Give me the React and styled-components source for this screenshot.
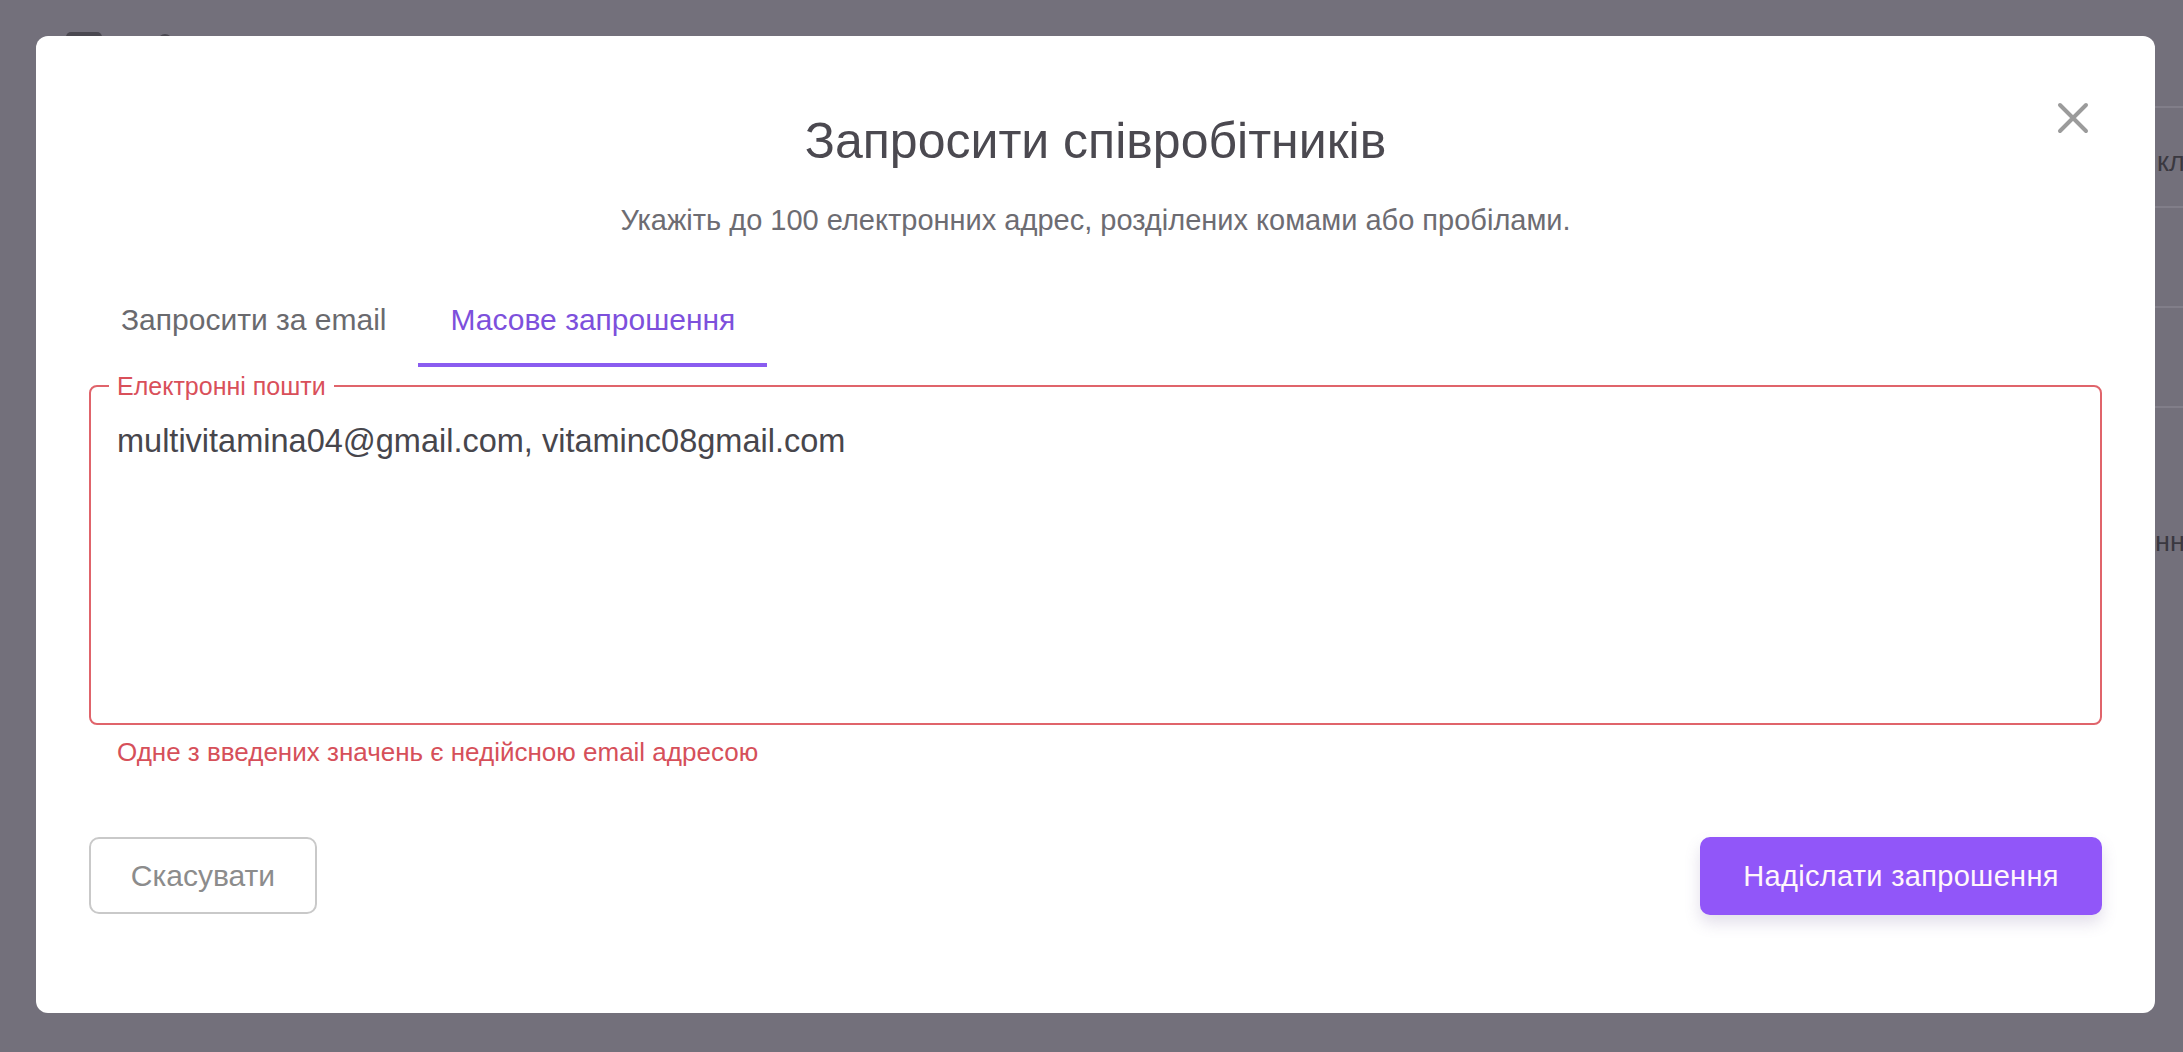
import styled, { createGlobalStyle } from "styled-components";
import { useState } from "react";

const GlobalStyle = createGlobalStyle`
  html, body {
    margin: 0;
    padding: 0;
  }
  body {
    background: #73707b;
    font-family: "Liberation Sans", Arial, sans-serif;
    overflow: hidden;
  }
`;

export default function App() {
  const [tab, setTab] = useState("bulk");
  const [emails, setEmails] = useState("multivitamina04@gmail.com, vitaminc08gmail.com");

  return (
    <>
      <GlobalStyle />
      <Page>
        <PageHeader>
          <HeaderIcon />
          <HeaderDot />
        </PageHeader>
        <Rows>
          <Row $pt={39} $indent={1857}>
            <RowText>клі</RowText>
          </Row>
          <Row $pt={0} $indent={1857} />
          <Row $pt={0} $indent={1857} />
          <Row $pt={0} $indent={1857} />
          <Row $pt={19} $indent={1840} $plain>
            <RowText>енн</RowText>
          </Row>
        </Rows>
      </Page>

      <Overlay>
        <Modal>
          <CloseButton aria-label="close">
            <svg width="32" height="32" viewBox="0 0 32 32">
              <path d="M3 3 L29 29 M29 3 L3 29" stroke="#9b9b9b" strokeWidth="4" strokeLinecap="round" fill="none" />
            </svg>
          </CloseButton>

          <Title>Запросити співробітників</Title>
          <Subtitle>Укажіть до 100 електронних адрес, розділених комами або пробілами.</Subtitle>

          <Tabs>
            <Tab $active={tab === "email"} onClick={() => setTab("email")}>
              Запросити за email
            </Tab>
            <Tab $active={tab === "bulk"} onClick={() => setTab("bulk")}>
              Масове запрошення
            </Tab>
          </Tabs>

          <Field>
            <Legend>Електронні пошти</Legend>
            <EmailsInput value={emails} onChange={(e) => setEmails(e.target.value)} />
          </Field>
          <ErrorText>Одне з введених значень є недійсною email адресою</ErrorText>

          <Footer>
            <CancelButton>Скасувати</CancelButton>
            <SubmitButton>Надіслати запрошення</SubmitButton>
          </Footer>
        </Modal>
      </Overlay>
    </>
  );
}

const Page = styled.div`
  width: 100%;
  height: 1052px;
  background: #73707b;
  overflow: hidden;
`;

const PageHeader = styled.div`
  height: 106px;
  display: flex;
  align-items: flex-start;
  gap: 56px;
  padding: 32px 0 0 66px;
  box-sizing: border-box;
`;

const HeaderIcon = styled.div`
  width: 36px;
  height: 24px;
  border-radius: 5px;
  background: #4a4850;
`;

const HeaderDot = styled.div`
  width: 14px;
  height: 14px;
  margin-top: 2px;
  border-radius: 50%;
  background: #4a4850;
`;

const Rows = styled.div`
  margin-left: 300px;
`;

const Row = styled.div`
  display: grid;
  grid-template-columns: ${({ $indent }) => $indent}px 1fr;
  height: 100px;
  box-sizing: border-box;
  border-top: 2px solid ${({ $plain }) => ($plain ? "transparent" : "#817e89")};
  padding-top: ${({ $pt }) => $pt}px;
`;

const RowText = styled.span`
  grid-column: 2;
  font-size: 27px;
  line-height: 30px;
  color: #3a3840;
  white-space: nowrap;
`;

const Overlay = styled.div`
  position: fixed;
  inset: 0;
  display: flex;
  padding: 36px 28px 39px 36px;
  box-sizing: border-box;
`;

const Modal = styled.div`
  position: relative;
  flex: 1;
  display: flex;
  flex-direction: column;
  background: #ffffff;
  border-radius: 12px;
  padding: 75px 53px 0;
  box-sizing: border-box;
`;

const CloseButton = styled.button`
  position: absolute;
  top: 66px;
  right: 66px;
  width: 32px;
  height: 32px;
  padding: 0;
  border: none;
  background: none;
  cursor: pointer;
  display: flex;
`;

const Title = styled.h2`
  margin: 0;
  text-align: center;
  font-size: 50px;
  line-height: 60px;
  font-weight: 400;
  color: #4b4950;
`;

const Subtitle = styled.p`
  margin: 32px 0 0;
  text-align: center;
  font-size: 29px;
  line-height: 34px;
  color: #6d6c72;
`;

const Tabs = styled.div`
  display: flex;
  margin-top: 45px;
`;

const Tab = styled.button`
  background: none;
  border: none;
  border-bottom: 4px solid ${({ $active }) => ($active ? "#8a5cf0" : "transparent")};
  padding: 20px 32px 25px;
  font-family: inherit;
  font-size: 30px;
  line-height: 36px;
  color: ${({ $active }) => ($active ? "#7d50dc" : "#6a6a6e")};
  cursor: pointer;
`;

const Field = styled.fieldset`
  margin: 5px 0 0;
  padding: 21px 26px 22px;
  border: 2px solid #e0646b;
  border-radius: 8px;
  min-width: 0;
`;

const Legend = styled.legend`
  padding: 0 8px;
  margin-left: -8px;
  font-size: 25px;
  line-height: 28px;
  color: #d9505a;
`;

const EmailsInput = styled.textarea`
  display: block;
  width: 100%;
  height: 280px;
  padding: 0;
  border: none;
  outline: none;
  resize: none;
  background: transparent;
  font-family: inherit;
  font-size: 32.5px;
  line-height: 40px;
  color: #47464c;
`;

const ErrorText = styled.div`
  margin-top: 13px;
  padding-left: 28px;
  font-size: 26px;
  line-height: 28px;
  color: #d6505a;
`;

const Footer = styled.div`
  display: flex;
  justify-content: space-between;
  align-items: flex-start;
  margin-top: 71px;
`;

const CancelButton = styled.button`
  width: 228px;
  height: 77px;
  border: 2px solid #c9c9c9;
  border-radius: 10px;
  background: #ffffff;
  font-family: inherit;
  font-size: 30px;
  color: #8c8c8c;
  cursor: pointer;
`;

const SubmitButton = styled.button`
  width: 402px;
  height: 78px;
  border: none;
  border-radius: 10px;
  background: #9156f9;
  box-shadow: 0 8px 16px rgba(110, 90, 150, 0.2);
  font-family: inherit;
  font-size: 29px;
  letter-spacing: 0.3px;
  color: #fff6fb;
  cursor: pointer;
`;
